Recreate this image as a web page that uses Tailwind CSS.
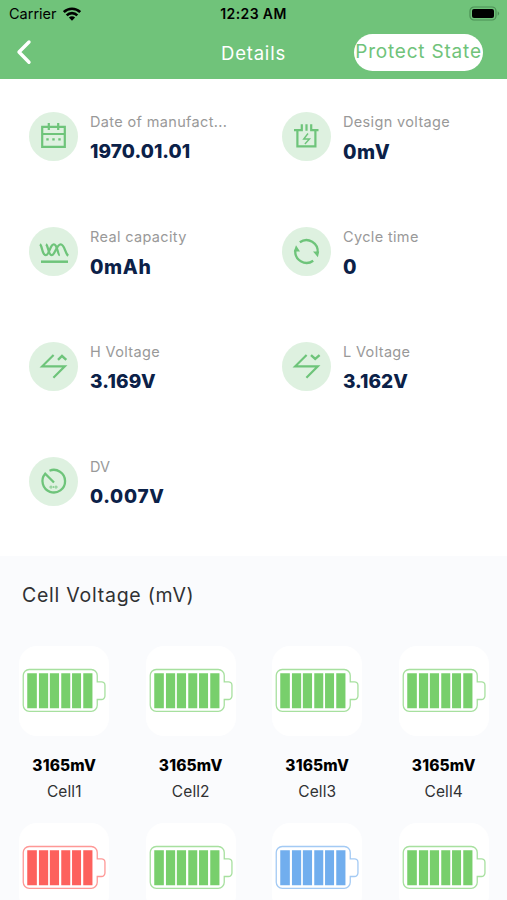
<!DOCTYPE html>
<html lang="en">
  <head>
    <meta charset="UTF-8" />
    <meta name="viewport" content="width=device-width, initial-scale=1.0" />
    <title>Details</title>
    <script src="https://cdn.jsdelivr.net/npm/@tailwindcss/browser@4"></script>
  </head>
  <body
    class="h-[900px] overflow-hidden bg-[#fafbfd] font-['Inter',sans-serif] text-black"
  >
    <header class="h-[79px] bg-[#70c37a]">
      <!-- Status bar -->
      <div class="grid h-[27px] grid-cols-3 items-center pl-[7px] pr-[7px]">
        <div class="flex items-center gap-[6px] pl-[2px]">
          <span class="text-[14.5px]">Carrier</span>
          <svg class="h-[14px] w-[18px]" viewBox="0 0 18 14" fill="none" stroke="#000" stroke-width="2.6">
            <path d="M0.8 5.1a11.7 11.7 0 0 1 16.4 0" />
            <path d="M3.7 8.3a7.5 7.5 0 0 1 10.6 0" />
            <path d="M9 13.7 5.9 10.5a4.4 4.4 0 0 1 6.2 0Z" fill="#000" stroke="none" />
          </svg>
        </div>
        <span class="whitespace-nowrap text-center text-[14px] font-semibold tracking-[0.4px]">12:23 AM</span>
        <svg class="h-[15px] w-[31px] justify-self-end" viewBox="0 0 31 15">
          <rect x="1" y="1" width="26" height="13" rx="4" fill="none" stroke="#4b8f54" stroke-width="1.2" />
          <rect x="3" y="3" width="22" height="9" rx="2" fill="#000" />
          <path d="M28.7 5.3a2.5 2.5 0 0 1 0 4.5z" fill="#4b8f54" />
        </svg>
      </div>
      <!-- Title bar -->
      <div class="grid h-[50px] grid-cols-[1fr_auto_1fr] items-center pl-[16px] pr-[24px]">
        <svg class="h-[26px] w-[16px]" viewBox="0 0 16 26" fill="none" stroke="#fff" stroke-width="3.4" stroke-linecap="round" stroke-linejoin="round">
          <path d="M13 3 3 13l10 10.3" />
        </svg>
        <h1 class="pl-[8px] pt-[3px] text-[18.5px] tracking-[0.8px] text-white">Details</h1>
        <button
          class="flex h-[37px] w-[129px] items-center justify-center justify-self-end whitespace-nowrap rounded-full bg-white text-[19px] tracking-[0.8px] text-[#70c37a]"
        >
          Protect State
        </button>
      </div>
    </header>

    <!-- Pack details -->
    <section class="grid h-[477px] auto-rows-[115px] grid-cols-[253px_1fr] bg-white">
      <div class="flex items-center gap-[12px] pl-[29px]">
        <svg class="size-[49px] shrink-0" viewBox="0 0 49 49" fill="none" stroke="#6ec47a" stroke-width="2.2">
          <circle cx="24.5" cy="24.5" r="24.5" fill="#def1e0" stroke="none" />
          <path d="M13.2 14.8h22.6v20H13.2zM13.2 22h22.6" />
          <path d="M19.8 11v7M29.2 11v7" />
          <path d="M17.3 27.3h2.4M23.3 27.3h2.4M29.3 27.3h2.4" />
        </svg>
        <div class="leading-[30px]">
          <p class="text-[14.5px] tracking-[0.35px] text-[#999]">Date of manufact...</p>
          <p class="text-[19px] font-extrabold tracking-[0.1px] text-[#0b2148]">1970.01.01</p>
        </div>
      </div>
      <div class="flex items-center gap-[12px] pl-[29px]">
        <svg class="size-[49px] shrink-0" viewBox="0 0 49 49" fill="none" stroke="#6ec47a" stroke-width="2.2">
          <circle cx="24.5" cy="24.5" r="24.5" fill="#def1e0" stroke="none" />
          <path d="M12 18.2h7.8v-6M36.5 18.2h-7.3v-6M24.5 12.2v6.6M15.4 18.2v16.2h18V18.2" />
          <path d="M26 21.5 21.7 27h5.8l-4.6 5" stroke-width="1.4" />
        </svg>
        <div class="leading-[30px]">
          <p class="text-[14.5px] tracking-[0.35px] text-[#999]">Design voltage</p>
          <p class="text-[19.5px] font-extrabold tracking-[0.6px] text-[#0b2148]">0mV</p>
        </div>
      </div>
      <div class="flex items-center gap-[12px] pl-[29px]">
        <svg class="size-[49px] shrink-0" viewBox="0 0 49 49" fill="none" stroke="#6ec47a" stroke-width="2.3">
          <circle cx="24.5" cy="24.5" r="24.5" fill="#def1e0" stroke="none" />
          <path d="M11 17.2c2.3 1.4 2 11 5.8 11s4-10.8 8-10.8 3.6 10.8 6 10.8" />
          <path d="M17 17.2c2.3 1.4 2.2 11 5.7 11s4.6-10.8 9-10.8c4 0 4.2 9 7.5 11.4" />
          <path d="M12 34.7h27" stroke-width="2.5" />
        </svg>
        <div class="leading-[30px]">
          <p class="text-[14.5px] tracking-[0.35px] text-[#999]">Real capacity</p>
          <p class="text-[19.5px] font-extrabold tracking-[0.6px] text-[#0b2148]">0mAh</p>
        </div>
      </div>
      <div class="flex items-center gap-[12px] pl-[29px]">
        <svg class="size-[49px] shrink-0" viewBox="0 0 49 49" fill="none" stroke="#6ec47a" stroke-width="2.3">
          <circle cx="24.5" cy="24.5" r="24.5" fill="#def1e0" stroke="none" />
          <path d="M17.8 15.3A11.3 11.3 0 0 1 35.6 26" />
          <path d="M31.2 33.7A11.3 11.3 0 0 1 13.4 23" />
          <path d="M31 24.5h6.2l-1.3 5.7zM18 24.5h-6.2l2.2-6.2z" fill="#6ec47a" stroke="none" />
        </svg>
        <div class="leading-[30px]">
          <p class="text-[14.5px] tracking-[0.35px] text-[#999]">Cycle time</p>
          <p class="text-[19.5px] font-extrabold text-[#0b2148]">0</p>
        </div>
      </div>
      <div class="flex items-center gap-[12px] pl-[29px]">
        <svg class="size-[49px] shrink-0" viewBox="0 0 49 49" fill="none" stroke="#6ec47a" stroke-width="2.2">
          <circle cx="24.5" cy="24.5" r="24.5" fill="#def1e0" stroke="none" />
          <path d="M24.6 13 13.2 24.3h22.6L24.4 35.8" />
          <path d="m29 17.8 4-3.8 4.3 3.8" stroke-width="2.4" />
        </svg>
        <div class="leading-[30px]">
          <p class="text-[14.5px] tracking-[0.35px] text-[#999]">H Voltage</p>
          <p class="text-[19px] font-extrabold tracking-[0.2px] text-[#0b2148]">3.169V</p>
        </div>
      </div>
      <div class="flex items-center gap-[12px] pl-[29px]">
        <svg class="size-[49px] shrink-0" viewBox="0 0 49 49" fill="none" stroke="#6ec47a" stroke-width="2.2">
          <circle cx="24.5" cy="24.5" r="24.5" fill="#def1e0" stroke="none" />
          <path d="M24.6 13 13.2 24.3h22.6L24.4 35.8" />
          <path d="m29 13.2 4.2 3.8 4.4-3.8" stroke-width="2.4" />
        </svg>
        <div class="leading-[30px]">
          <p class="text-[14.5px] tracking-[0.35px] text-[#999]">L Voltage</p>
          <p class="text-[19px] font-extrabold text-[#0b2148]">3.162V</p>
        </div>
      </div>
      <div class="flex items-center gap-[12px] pl-[29px]">
        <svg class="size-[49px] shrink-0" viewBox="0 0 49 49" fill="none" stroke="#6ec47a" stroke-width="2.3">
          <circle cx="24.5" cy="24.5" r="24.5" fill="#def1e0" stroke="none" />
          <path d="M20.5 13.7A11.3 11.3 0 1 1 16.2 16.8L25 25.5" />
          <path d="M21 31v-1.8h2V31zM24.5 29v2M26 31v-1.8h2V31z" stroke-width="0.7" />
        </svg>
        <div class="leading-[30px]">
          <p class="text-[14.5px] text-[#999]">DV</p>
          <p class="text-[19px] font-extrabold tracking-[0.7px] text-[#0b2148]">0.007V</p>
        </div>
      </div>
    </section>

    <!-- Cell voltages -->
    <section>
      <h2 class="pl-[22px] pt-[24px] text-[19.5px] leading-[30px] tracking-[0.75px] text-[#303133]">Cell Voltage (mV)</h2>
      <div id="cells" class="grid auto-rows-[177px] grid-cols-4 pl-px pt-[36px]"></div>
    </section>

    <script>
      // Cells without a reading show only their battery
      const cells = [
        { name: "Cell1", mv: 3165, color: "text-[#78cf6c]" },
        { name: "Cell2", mv: 3165, color: "text-[#78cf6c]" },
        { name: "Cell3", mv: 3165, color: "text-[#78cf6c]" },
        { name: "Cell4", mv: 3165, color: "text-[#78cf6c]" },
        { color: "text-[#fd615d]" },
        { color: "text-[#78cf6c]" },
        { color: "text-[#71aeee]" },
        { color: "text-[#78cf6c]" },
      ];

      const reading = (cell) => `
        <p class="mt-[17px] text-[15.5px] font-extrabold leading-[26px] tracking-[0.15px]">${cell.mv}mV</p>
        <p class="text-[15.5px] leading-[26px] tracking-[0.1px] text-[#303133]">${cell.name}</p>`;

      document.getElementById("cells").innerHTML = cells
        .map(
          (cell) => `
            <div class="flex flex-col items-center">
              <div class="size-[90px] rounded-[18px] bg-white ${cell.color}">
                <svg class="size-full" viewBox="-0.75 0 90 90" fill="currentColor">
                  <path d="M9.5 23.5H71.5a6 6 0 0 1 6 6V35.8h4.2a3.5 3.5 0 0 1 3.5 3.5v10.7a3.5 3.5 0 0 1-3.5 3.5H77.5v5.8a6 6 0 0 1-6 6H9.5a6 6 0 0 1-6-6V29.500a6 6 0 0 1 6-6z" fill="none" stroke="currentColor" stroke-opacity="0.65" stroke-width="1.3" />
                  <path d="M7.5 27.2h9.6v35H7.5zM19.2 27.2h9.2v35h-9.2zM30.1 27.2h9.2v35h-9.2zM41.5 27.2h9v35h-9zM52.3 27.2h9v35h-9zM63.5 27.2h9.2v35h-9.2z" />
                </svg>
              </div>
              ${cell.mv ? reading(cell) : ""}
            </div>`
        )
        .join("");
    </script>
  </body>
</html>
